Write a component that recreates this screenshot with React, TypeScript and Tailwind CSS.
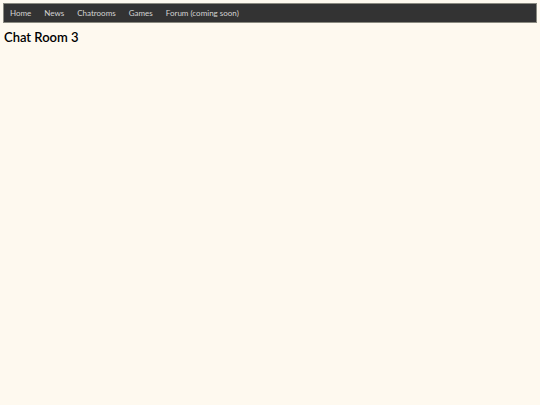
export default function App() {
  const links = ['Home', 'News', 'Chatrooms', 'Games', 'Forum (coming soon)']
  return (
    <div className="min-h-screen bg-[#fef9ef] p-[3px] font-['Lato',sans-serif] text-black">
      <nav className="flex h-[20px] items-center gap-[13px] border border-[#8a8a80] bg-[#333333] pl-[6px]">
        {links.map((l) => (
          <a key={l} className="text-[8px] leading-none text-[#d4d4d4]">
            {l}
          </a>
        ))}
      </nav>
      <h1 className="mt-[5px] ml-px text-[13px] font-semibold leading-[18px]">Chat Room 3</h1>
    </div>
  )
}
